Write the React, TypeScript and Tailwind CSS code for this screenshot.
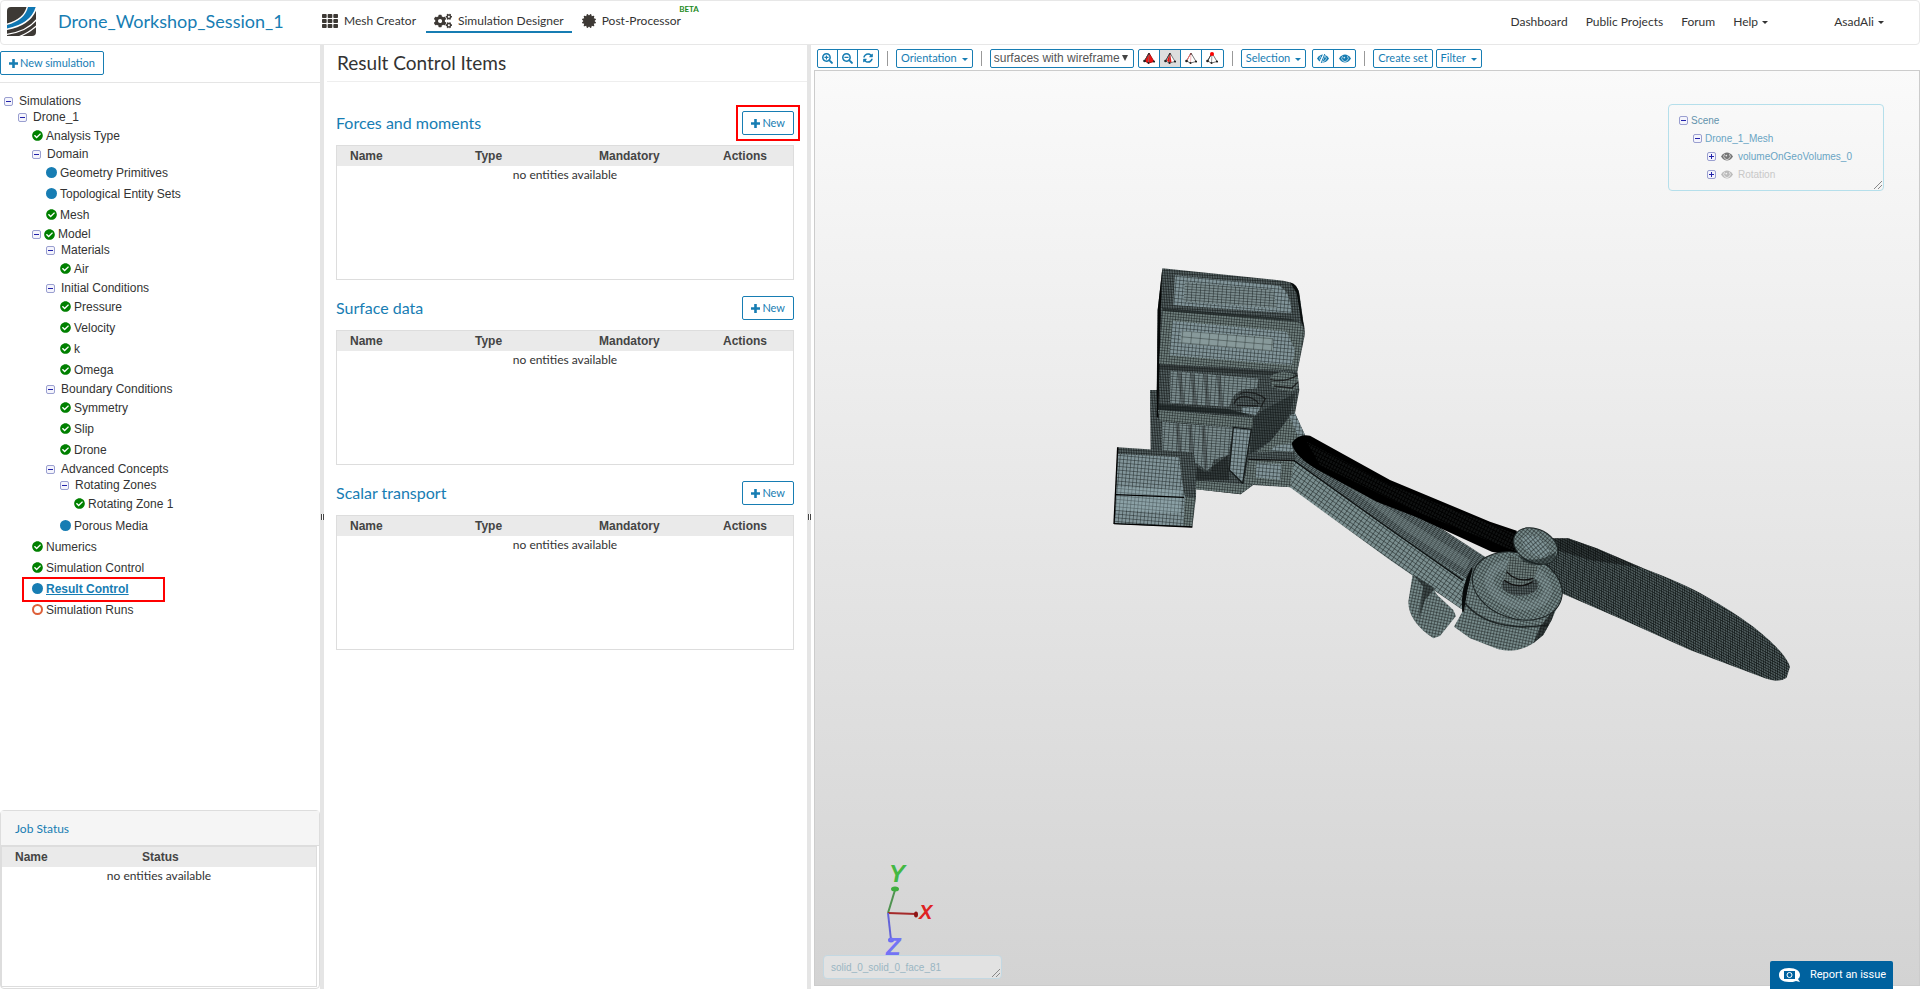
import { useState } from "react";
import type { ReactNode } from "react";
import {
  FaCertificate,
  FaCheckCircle,
  FaCogs,
  FaSearchMinus,
  FaSearchPlus,
  FaSyncAlt,
  FaTh,
} from "react-icons/fa";

type Status = "done" | "set" | "open";

interface TreeItem {
  label: string;
  status?: Status;
  active?: boolean;
  children?: TreeItem[];
}

const TREE: TreeItem[] = [
  {
    label: "Simulations",
    children: [
      {
        label: "Drone_1",
        children: [
          { label: "Analysis Type", status: "done" },
          {
            label: "Domain",
            children: [
              { label: "Geometry Primitives", status: "set" },
              { label: "Topological Entity Sets", status: "set" },
              { label: "Mesh", status: "done" },
            ],
          },
          {
            label: "Model",
            status: "done",
            children: [
              { label: "Materials", children: [{ label: "Air", status: "done" }] },
              {
                label: "Initial Conditions",
                children: [
                  { label: "Pressure", status: "done" },
                  { label: "Velocity", status: "done" },
                  { label: "k", status: "done" },
                  { label: "Omega", status: "done" },
                ],
              },
              {
                label: "Boundary Conditions",
                children: [
                  { label: "Symmetry", status: "done" },
                  { label: "Slip", status: "done" },
                  { label: "Drone", status: "done" },
                ],
              },
              {
                label: "Advanced Concepts",
                children: [
                  {
                    label: "Rotating Zones",
                    children: [{ label: "Rotating Zone 1", status: "done" }],
                  },
                  { label: "Porous Media", status: "set" },
                ],
              },
            ],
          },
          { label: "Numerics", status: "done" },
          { label: "Simulation Control", status: "done" },
          { label: "Result Control", status: "set", active: true },
          { label: "Simulation Runs", status: "open" },
        ],
      },
    ],
  },
];

const SECTIONS = ["Forces and moments", "Surface data", "Scalar transport"];

function Caret() {
  return (
    <span className="ml-px inline-block border-x-[3px] border-t-[3px] border-x-transparent border-t-current align-middle" />
  );
}

function Toggle({ open, onClick, label }: { open: boolean; onClick?: () => void; label: string }) {
  return (
    <button
      type="button"
      aria-label={`Toggle ${label}`}
      onClick={onClick}
      className="flex size-[9px] shrink-0 items-center justify-center rounded-xs border border-[#9a9fd0] bg-[#f4f4fc]"
    >
      <svg viewBox="0 0 7 7" className="size-[7px]" stroke="#2222aa" strokeWidth="1">
        <path d="M1 3.5h5" />
        {!open && <path d="M3.5 1v5" />}
      </svg>
    </button>
  );
}

function StatusIcon({ status }: { status: Status }) {
  if (status === "done") return <FaCheckCircle className="size-[11px] shrink-0 text-[#008000]" />;
  if (status === "set") return <span className="size-[11px] shrink-0 rounded-full bg-[#177db3]" />;
  return <span className="size-[11px] shrink-0 rounded-full border-2 border-[#dd5f38]" />;
}

function EyeIcon({ className, slashed }: { className: string; slashed?: boolean }) {
  return (
    <svg viewBox="0 0 12 9" className={`h-[9px] w-3 ${className}`}>
      <path d="M0 4.500C2 1.500 4 .5 6 .5s4 1 6 4c-2 3-4 4-6 4s-4-1-6-4z" fill="currentColor" />
      <path
        d="M3.600 2.200a3.200 3.200 0 1 0 4.800 0"
        fill="none"
        stroke="#fff"
        strokeWidth="0.800"
        opacity="0.800"
      />
      <circle cx="5.300" cy="3.600" r="0.900" fill="#fff" opacity="0.800" />
      {slashed && (
        <>
          <path d="M7.500 0 3.500 9" stroke="#fff" strokeWidth="2.600" />
          <path d="M7.800 0 4.200 9" stroke="currentColor" strokeWidth="1" />
        </>
      )}
    </svg>
  );
}

function TreeNode({ item }: { item: TreeItem }) {
  const [open, setOpen] = useState(true);
  const hasChildren = !!item.children;
  const leafGroup = item.children?.every((c) => !c.children);

  return (
    <li>
      <div className={`relative flex items-center ${hasChildren ? "h-4" : "h-[21px]"}`}>
        {hasChildren && <Toggle open={open} onClick={() => setOpen(!open)} label={item.label} />}
        {hasChildren && item.status && <span className="w-[3px]" />}
        {item.status && <StatusIcon status={item.status} />}
        <a
          href="#"
          className={
            item.active
              ? "pl-[3px] font-bold text-[#177db3] underline"
              : hasChildren && !item.status
                ? "pl-1.5"
                : "pl-[3px]"
          }
        >
          {item.label}
        </a>
        {item.active && (
          <span className="pointer-events-none absolute -left-2.5 -top-px h-[25px] w-[143px] border-2 border-[#f00]" />
        )}
      </div>
      {item.children && open && (
        <ul className={`pl-3.5 ${leafGroup ? "pb-px" : ""}`}>
          {item.children.map((child) => (
            <TreeNode key={child.label} item={child} />
          ))}
        </ul>
      )}
    </li>
  );
}

function NewButton({ label }: { label: string }) {
  return (
    <button
      type="button"
      className="flex h-6 items-center gap-0.5 rounded-xs border border-[#177db3] bg-white px-2 text-[11px] text-[#177db3]"
    >
      <svg viewBox="0 0 9 9" className="size-[9px]" stroke="currentColor" strokeWidth="2.600">
        <path d="M0 4.500h9M4.500 0v9" />
      </svg>
      {label}
    </button>
  );
}

function EntityTable({ columns, widths }: { columns: string[]; widths: string[] }) {
  return (
    <table className="w-full table-fixed text-xs">
      <thead className="bg-[#eaeaea] font-['Liberation_Sans',sans-serif] text-[#444]">
        <tr>
          {columns.map((c, i) => (
            <th key={c} className={`h-5 pl-[13px] text-left font-bold ${widths[i]}`}>
              {c}
            </th>
          ))}
        </tr>
      </thead>
      <tbody>
        <tr>
          <td colSpan={columns.length} className="h-[18px] text-center">
            no entities available
          </td>
        </tr>
      </tbody>
    </table>
  );
}

function Section({ title, marked }: { title: string; marked?: boolean }) {
  return (
    <section className="mb-4">
      <div className="mb-2.5 flex items-center justify-between">
        <h2 className="text-base text-[#177db3]">{title}</h2>
        <div className="relative">
          <NewButton label="New" />
          {marked && (
            <span className="pointer-events-none absolute -inset-1.5 border-2 border-[#f00]" />
          )}
        </div>
      </div>
      <div className="h-[135px] border border-[#ddd]">
        <EntityTable
          columns={["Name", "Type", "Mandatory", "Actions"]}
          widths={["w-[125px]", "w-[124px]", "w-[124px]", ""]}
        />
      </div>
    </section>
  );
}

function Logo() {
  return (
    <svg viewBox="0 0 29 29" className="size-[29px] shrink-0">
      <defs>
        <clipPath id="logo">
          <path d="M4 0H29V25Q29 29 25 29H0V4Q0 0 4 0z" />
        </clipPath>
      </defs>
      <g clipPath="url(#logo)">
        <rect width="29" height="29" fill="#3d3935" />
        <path d="M0 18C12 14 19 8 20.500 0H29C27 12 15 20 0 22z" fill="#0f77b3" />
        <g fill="none" stroke="#fff">
          <path d="M-1 17.500C11 14.500 18.500 9 20.500-1" strokeWidth="1.400" />
          <path d="M-1 22.500C15 19.500 26 12 29.500 0" strokeWidth="1.600" />
          <path d="M-1 27.500C13 25.500 24 20 30 12" strokeWidth="1.400" />
          <path d="M11 30C19 27.500 25 23 30 18.500" strokeWidth="1.200" />
        </g>
      </g>
    </svg>
  );
}

function Header() {
  const tabs = [
    { label: "Mesh Creator", icon: FaTh, size: "size-4" },
    { label: "Simulation Designer", icon: FaCogs, size: "size-[18px]", active: true },
    { label: "Post-Processor", icon: FaCertificate, size: "size-3.5", beta: true },
  ];
  return (
    <header className="flex h-[45px] shrink-0 items-center rounded-sm border border-[#e7e7e7] pb-[3px] pl-1.5 pr-[35px] text-[#333]">
      <Logo />
      <a href="#" className="ml-[22px] w-[256px] text-lg text-[#177db3]">
        Drone_Workshop_Session_1
      </a>
      <nav className="flex gap-0.5 text-xs">
        {tabs.map((t) => (
          <a
            key={t.label}
            href="#"
            className={`relative flex h-6 items-center gap-1.5 border-b-2 px-2 pt-0.5 ${t.active ? "border-[#177db3]" : "border-transparent"}`}
          >
            <t.icon className={`text-[#3d3935] ${t.size}`} />
            {t.label}
            {t.beta && (
              <span className="absolute -right-2.5 -top-1 text-[8px] font-bold leading-none text-[#1d8a1d]">
                BETA
              </span>
            )}
          </a>
        ))}
      </nav>
      <nav className="ml-auto mt-0.5 flex items-center gap-[18px] text-xs">
        <a href="#">Dashboard</a>
        <a href="#">Public Projects</a>
        <a href="#">Forum</a>
        <button type="button">
          Help <Caret />
        </button>
        <button type="button" className="ml-12">
          AsadAli <Caret />
        </button>
      </nav>
    </header>
  );
}

function Splitter() {
  return (
    <div className="flex w-1 shrink-0 items-center justify-center bg-[#e5e5e5]">
      <span className="h-1.5 w-[3px] border-x border-[#444] bg-white" />
    </div>
  );
}

// tetrahedron glyph used for the volume / face / edge / node pick modes
function PickIcon({ mode }: { mode: "volume" | "face" | "edge" | "node" }) {
  return (
    <svg viewBox="0 0 12 12" className="size-3" fill="none" strokeLinejoin="round">
      <path
        d="M6 1 1.500 9l4 2L11 9.500z"
        fill={mode === "volume" ? "#e11" : "#fff"}
        stroke={mode === "volume" ? "#a11" : "#777"}
      />
      {mode === "face" && <path d="M6 1 3 8.500 5.500 11l2-1z" fill="#e11" />}
      <path d="M6 1 5.500 11" stroke={mode === "edge" ? "#e99" : "#777"} strokeWidth="0.700" />
      <path d="M6 1 1.500 9" stroke={mode === "edge" ? "#e66" : "#444"} />
      <g fill="#222">
        <circle cx="1.500" cy="9" r="1.300" />
        <circle cx="5.500" cy="11" r="1" />
        <circle cx="11" cy="9.500" r="1.100" />
      </g>
      <circle cx="6" cy="2" r={mode === "node" ? 2 : 0.8} fill={mode === "node" ? "#f00" : "#222"} />
    </svg>
  );
}

function ButtonGroup({
  items,
  active,
  width,
}: {
  items: { label: string; icon: ReactNode }[];
  active?: number;
  width: string;
}) {
  return (
    <div className="flex h-[19px] divide-x divide-[#177db3] overflow-hidden rounded-xs border border-[#177db3] text-[#177db3]">
      {items.map((b, i) => (
        <button
          key={b.label}
          type="button"
          aria-label={b.label}
          className={`flex items-center justify-center ${width} ${i === active ? "bg-[#ddd]" : ""}`}
        >
          {b.icon}
        </button>
      ))}
    </div>
  );
}

function ToolButton({ children, caret }: { children: string; caret?: boolean }) {
  return (
    <button
      type="button"
      className="flex h-[19px] items-center whitespace-nowrap rounded-xs border border-[#177db3] px-1 text-[11px] text-[#177db3]"
    >
      {children}
      {caret && (
        <span className="ml-[5px] mt-0.5 border-x-[3px] border-t-[3px] border-x-transparent border-t-current" />
      )}
    </button>
  );
}

function Divider() {
  return <span className="mx-2 h-[15px] w-px bg-[#999]" />;
}

function Toolbar() {
  return (
    <div className="flex h-[25px] items-center pl-1.5 pt-px">
      <ButtonGroup
        width="w-5"
        items={[
          { label: "Zoom in", icon: <FaSearchPlus className="size-[11px]" /> },
          { label: "Zoom out", icon: <FaSearchMinus className="size-[11px]" /> },
          { label: "Reset view", icon: <FaSyncAlt className="size-[10px]" /> },
        ]}
      />
      <Divider />
      <ToolButton caret>Orientation</ToolButton>
      <Divider />
      <div className="relative mr-1 flex items-center">
        <select
          aria-label="Render mode"
          className="h-[19px] w-[144px] appearance-none rounded-xs border border-[#177db3] bg-white pl-[3px] font-['Liberation_Sans',sans-serif] text-xs text-[#555]"
        >
          <option>surfaces with wireframe</option>
          <option>surfaces</option>
          <option>wireframe</option>
        </select>
        <span className="pointer-events-none absolute right-1.5 top-1.5 border-x-[3px] border-t-[6px] border-x-transparent border-t-[#444]" />
      </div>
      <ButtonGroup
        width="w-[21px]"
        active={1}
        items={[
          { label: "Pick volumes", icon: <PickIcon mode="volume" /> },
          { label: "Pick faces", icon: <PickIcon mode="face" /> },
          { label: "Pick edges", icon: <PickIcon mode="edge" /> },
          { label: "Pick nodes", icon: <PickIcon mode="node" /> },
        ]}
      />
      <Divider />
      <ToolButton caret>Selection</ToolButton>
      <span className="w-1.5" />
      <ButtonGroup
        width="w-[21px]"
        items={[
          { label: "Hide selection", icon: <EyeIcon className="" slashed /> },
          { label: "Show selection", icon: <EyeIcon className="" /> },
        ]}
      />
      <Divider />
      <ToolButton>Create set</ToolButton>
      <span className="w-[3px]" />
      <ToolButton caret>Filter</ToolButton>
    </div>
  );
}

function Grid({
  id,
  step,
  angle,
  base,
  line,
  width = 1.4,
  skew = 0,
}: {
  id: string;
  step: [number, number];
  angle: number;
  base: string;
  line: string;
  width?: number;
  skew?: number;
}) {
  return (
    <pattern
      id={id}
      width={step[0]}
      height={step[1]}
      patternUnits="userSpaceOnUse"
      patternTransform={`rotate(${angle}) skewX(${skew})`}
    >
      <rect width={step[0]} height={step[1]} fill={base} />
      <path d={`M0 0H${step[0]}M0 0V${step[1]}`} stroke={line} strokeWidth={width * 2} />
    </pattern>
  );
}

function DroneMesh() {
  return (
    <g transform="translate(1090 250) scale(0.33333)">
      <defs>
        <Grid id="open" step={[27, 18]} angle={5} base="#87999a" line="#1e2626" width={1.2} />
        <Grid id="light" step={[11, 11]} angle={5} base="#82959a" line="#1c2424" />
        <Grid id="rows" step={[13, 8]} angle={4} base="#7b8c8e" line="#1c2424" />
        <Grid id="mid" step={[8, 8]} angle={5} base="#71817f" line="#151b1b" />
        <Grid id="dense" step={[5, 8]} angle={3} base="#5c696a" line="#0c1010" />
        <Grid id="armTop" step={[12, 5]} angle={32} base="#68787a" line="#0d1212" />
        <Grid id="armSide" step={[13, 11]} angle={35} base="#7b8f90" line="#161d1d" />
        <Grid id="motor" step={[9, 9]} angle={12} base="#788c8c" line="#141a1a" />
        <Grid id="hub" step={[12, 9]} angle={15} base="#82979a" line="#141a1a" />
        <Grid id="blade" step={[8, 7]} angle={28} skew={30} base="#505d5e" line="#0a0f0f" width={1.8} />
        <Grid id="black" step={[9, 11]} angle={27} base="#101212" line="#000" width={3} />
      </defs>

      {/* central body */}
      <path d="M180 420h30v190h-28z" fill="url(#dense)" />
      <path
        d="M217 55 580 92Q622 98 628 130L640 215Q647 240 643 262L622 365 628 420 615 490 645 555 640 600 604 712 490 705 452 733 318 718 205 600 200 420 203 180z"
        fill="url(#dense)"
      />
      <path d="M217 55 203 180 200 500 205 505 212 180z" fill="#050707" />
      <path d="M600 97Q624 102 628 135L642 235 634 215 620 130z" fill="#0a0e0e" />
      <path d="M255 76 560 106Q600 115 605 190L250 165z" fill="url(#light)" />
      <path d="M285 95 550 120 560 175 280 155z" fill="url(#rows)" />
      <path d="M218 176 610 210Q640 218 641 250L622 362 207 342z" fill="url(#mid)" />
      <path d="M248 213 590 245 615 300 605 345 238 316z" fill="url(#light)" />
      <path d="M275 242 548 262 550 304 270 280z" fill="url(#open)" />
      <path d="M218 174 600 206 630 217 600 213 218 183z" fill="#1a2020" opacity=".75" />
      <path d="M207 342 622 368V378L207 358z" fill="#1a2020" opacity=".45" />
      <path d="M242 362 505 386 500 415 455 420 415 470 240 460z" fill="url(#rows)" />
      <path d="M205 462 415 477 490 497 205 480z" fill="#161c1c" opacity=".7" />
      <path d="M204 480 492 505 486 538 210 512z" fill="url(#mid)" />
      <path d="M217 516 430 534 415 615 370 630 360 668 320 640 217 605z" fill="url(#rows)" />
      <g fill="#111" opacity=".3">
        <path d="M262 366h12l10 95h-12zM300 369h12l10 95h-12zM340 372h12l8 95h-12zM380 376h12l8 92h-12zM256 520h12l8 88h-12zM294 524h12l8 110h-12zM334 528h12l8 128h-12z" />
      </g>

      {/* clamps */}
      <path d="M540 385Q545 368 580 366 620 368 624 385L626 415 600 425 545 412z" fill="url(#mid)" />
      <path
        d="M540 388Q580 400 622 376M552 408 606 414 624 396"
        fill="none"
        stroke="#111"
        strokeWidth="4"
        opacity=".8"
      />
      <path d="M420 470Q424 425 470 418 520 414 530 440L528 462 500 495 440 484z" fill="url(#dense)" />
      <path
        d="M432 462Q440 436 470 440 498 446 506 462M450 430Q490 420 526 446L512 472M440 466 505 468"
        fill="none"
        stroke="#111"
        strokeWidth="4"
        opacity=".7"
      />
      <path d="M455 470 512 472 498 494 458 488z" fill="url(#light)" />
      <path d="M490 503 520 480 615 430 600 490 560 560 480 612z" fill="url(#dense)" />
      <path d="M490 503 520 480 615 430 600 490 560 560 480 612z" fill="#0c1010" opacity=".35" />
      <path d="M540 575 600 500 630 560 605 605 500 605z" fill="url(#mid)" />
      <path d="M555 588 602 580 612 604 540 604z" fill="url(#light)" />
      <path d="M598 497 615 490 645 555 625 560z" fill="url(#light)" />
      <path d="M430 532 484 538 458 700 418 660z" fill="url(#light)" stroke="#151a1a" strokeWidth="4" />
      <path d="M320 650 345 665 415 615 418 690 318 690z" fill="#101414" opacity=".5" />
      <path d="M318 692 460 702 486 706 452 733 318 718z" fill="url(#mid)" />
      <path d="M475 628 615 632 604 712 462 700z" fill="url(#mid)" />
      <path d="M500 640 575 642 572 690 497 682z" fill="url(#light)" />
      <path d="M475 628 615 632" stroke="#111" strokeWidth="4" />

      {/* side cylinder */}
      <path d="M83 592 310 607Q320 640 318 740L307 832 72 822z" fill="url(#dense)" />
      <path d="M84 612 268 622 275 690 285 740 280 828 72 821z" fill="url(#light)" />
      <path d="M80 710 274 720 270 790 76 780z" fill="#a3bcc2" opacity=".3" />
      <path d="M285 740 316 742 306 830 280 828z" fill="url(#mid)" />
      <path d="M78 734 282 742M72 821 307 831" stroke="#000" strokeWidth="4" />
      <path d="M83 592 72 822" stroke="#000" strokeWidth="4" />

      {/* arm */}
      <path d="M608 590 700 610 1000 800 1200 930 1190 1000 1120 992 900 838 620 636z" fill="url(#armTop)" />
      <path d="M760 700 800 715 1140 930 1128 960 950 845z" fill="#90a3a5" opacity=".25" />
      <path d="M612 632 900 838 1150 1000 1130 1085 1110 1075 900 930 600 712z" fill="url(#armSide)" />
      <path d="M612 632 900 838 1120 992" fill="none" stroke="#0c1010" strokeWidth="4" />

      {/* hook */}
      <path
        d="M968 972 955 1055Q955 1115 1030 1165L1050 1158 1098 1098 1090 1080 1042 1035 1025 1010z"
        fill="url(#motor)"
      />
      <path d="M968 972 1035 1015 1005 1050 985 1110 1000 1010z" fill="#0c1010" opacity=".55" />

      {/* left blade */}
      <path
        d="M605 580Q625 550 660 557L900 690 1200 815 1280 842 1290 922 1205 905 980 802 860 755 680 658Q615 620 605 580z"
        fill="#000"
      />
      <path d="M650 575 900 705 1270 850 1280 905 980 785 690 645z" fill="url(#black)" />

      {/* right blade */}
      <path
        d="M1385 865H1435L1520 895 1660 955Q1780 1000 1850 1040 1930 1085 1990 1130 2085 1205 2100 1250L2090 1283Q2065 1300 2025 1285L1800 1200 1600 1110 1415 1030 1335 975z"
        fill="url(#blade)"
      />
      <path d="M1385 865H1435L1520 895 1660 955 1500 930 1400 900z" fill="#080b0b" opacity=".45" />

      {/* motor */}
      <path
        d="M1150 950 1115 1030 1117 1085 1092 1130 1140 1165 1225 1198Q1280 1212 1330 1180L1360 1155 1385 1110 1415 1040z"
        fill="url(#motor)"
      />
      <path d="M1385 1110 1360 1155 1330 1180 1350 1130 1390 1080 1415 1020z" fill="#060909" opacity=".6" />
      <ellipse
        cx="1282"
        cy="1008"
        rx="138"
        ry="98"
        transform="rotate(18 1282 1008)"
        fill="url(#motor)"
        stroke="#1b2222"
        strokeWidth="3"
      />
      <ellipse
        cx="1285"
        cy="1005"
        rx="90"
        ry="58"
        transform="rotate(18 1285 1005)"
        fill="none"
        stroke="#9cb0b2"
        strokeWidth="28"
        opacity=".2"
      />
      <path d="M1146 955Q1112 1015 1119 1085 1128 1020 1146 955z" fill="#080b0b" stroke="#080b0b" strokeWidth="5" />
      <path d="M1125 1060Q1200 1150 1375 1125" stroke="#101515" strokeWidth="5" fill="none" opacity=".8" />
      <ellipse cx="1290" cy="1005" rx="55" ry="32" fill="url(#dense)" />
      <path d="M1260 915 1345 950 1328 995Q1285 1020 1242 990z" fill="url(#mid)" />
      <path d="M1250 965Q1280 1000 1330 985M1242 990Q1285 1022 1328 995" stroke="#111" strokeWidth="4" fill="none" />
      <ellipse
        cx="1337"
        cy="888"
        rx="70"
        ry="50"
        transform="rotate(28 1337 888)"
        fill="url(#motor)"
        stroke="#222b2b"
        strokeWidth="3"
      />
      <path d="M1280 912Q1330 950 1398 905L1395 925Q1350 960 1300 935z" fill="#0c1111" opacity=".45" />
      <ellipse cx="1337" cy="888" rx="46" ry="26" transform="rotate(35 1337 888)" fill="url(#hub)" />
    </g>
  );
}

function Axes() {
  return (
    <g strokeWidth="2" fontFamily="Liberation Sans, sans-serif" fontWeight="bold" fontStyle="italic">
      <path d="M888 913 895 890" stroke="#4f9350" />
      <path d="M888 913 916 914" stroke="#a52a2a" />
      <path d="M888 913 891 940" stroke="#6464d8" />
      <ellipse cx="895" cy="889" rx="4" ry="2.500" fill="#3fae3f" />
      <ellipse cx="916" cy="914.500" rx="2" ry="3" fill="#8e1515" />
      <ellipse cx="891" cy="940" rx="3" ry="2.500" fill="#6a6af5" />
      <text x="889" y="882" fontSize="24" fill="#43b843">
        Y
      </text>
      <text x="919" y="919" fontSize="20" fill="#df2222">
        X
      </text>
      <text x="886" y="955" fontSize="24" fill="#7373f5">
        Z
      </text>
    </g>
  );
}

function ResizeGrip() {
  return (
    <svg viewBox="0 0 8 8" className="absolute bottom-px right-px size-2" stroke="#888">
      <path d="M0 8 8 0M4 8l4-4" />
    </svg>
  );
}

function SceneRow({
  label,
  open,
  className,
  eye,
}: {
  label: string;
  open: boolean;
  className: string;
  eye?: string;
}) {
  return (
    <li className={`flex h-[18px] items-center gap-[3px] ${className}`}>
      <Toggle open={open} label={label} />
      {eye && <EyeIcon className={`mx-0.5 ${eye}`} />}
      <a href="#">{label}</a>
    </li>
  );
}

function Viewer() {
  return (
    <div className="relative ml-[3px] mb-[3px] min-h-0 flex-1 border border-[#ccc] bg-linear-to-b from-[#fafafa] to-[#d3d3d3] font-['Liberation_Sans',sans-serif] text-[10px]">
      <svg viewBox="815 71 1104 914" className="absolute inset-0 size-full">
        <DroneMesh />
        <Axes />
      </svg>
      <ul className="absolute right-[35px] top-[33px] h-[87px] w-[216px] rounded-sm border border-[#b5dfeb] pl-2.5 pt-1.5 text-[#6aa5c4]">
        <SceneRow label="Scene" open className="text-[#6393ad]" />
        <SceneRow label="Drone_1_Mesh" open className="pl-3.5" />
        <SceneRow label="volumeOnGeoVolumes_0" open={false} className="pl-7" eye="text-[#777]" />
        <SceneRow label="Rotation" open={false} className="pl-7 text-[#c8c8c8]" eye="text-[#bbb]" />
        <ResizeGrip />
      </ul>
      <div className="absolute bottom-1.5 left-2 flex h-6 w-[179px] items-center rounded-sm border border-[#c3d8e2] bg-[#e2e2e2] pl-[7px] text-[#9ab6c3]">
        solid_0_solid_0_face_81
        <ResizeGrip />
      </div>
    </div>
  );
}

function JobStatus() {
  return (
    <section className="h-[179px] shrink-0 rounded-sm border border-[#ddd]">
      <h2 className="flex h-[35px] items-center border-b border-[#ddd] bg-[#f5f5f5] pl-3.5 pt-px text-xs text-[#177db3]">
        Job Status
      </h2>
      <div className="mr-0.5 h-[141px] border border-[#ddd]">
        <EntityTable columns={["Name", "Status"]} widths={["w-[127px]", ""]} />
      </div>
    </section>
  );
}

export default function App() {
  return (
    <div className="flex h-screen flex-col overflow-hidden bg-white font-[Lato,sans-serif] text-[#333]">
      <Header />
      <div className="flex min-h-0 flex-1">
        <aside className="flex w-[320px] shrink-0 flex-col">
          <div className="border-b border-[#e5e5e5] pb-[7px] pt-1.5">
            <div className="flex">
              <NewButton label="New simulation" />
            </div>
          </div>
          <ul className="min-h-0 flex-1 overflow-auto pl-1 pt-2.5 font-['Liberation_Sans',sans-serif] text-xs">
            {TREE.map((item) => (
              <TreeNode key={item.label} item={item} />
            ))}
          </ul>
          <JobStatus />
        </aside>
        <Splitter />
        <main className="w-[483px] shrink-0 overflow-auto pl-[3px]">
          <h1 className="flex h-[37px] items-center border-b border-[#eee] pl-2.5 text-[19px]">
            Result Control Items
          </h1>
          <div className="pl-[9px] pr-[13px] pt-[29px]">
            {SECTIONS.map((title, i) => (
              <Section key={title} title={title} marked={i === 0} />
            ))}
          </div>
        </main>
        <Splitter />
        <div className="flex min-w-0 flex-1 flex-col">
          <Toolbar />
          <Viewer />
        </div>
      </div>
      <button
        type="button"
        className="fixed bottom-0 right-[27px] flex h-7 w-[123px] items-center gap-2.5 rounded-t-xs bg-[#00629f] pl-[9px] font-[Roboto,sans-serif] text-[11px] text-white"
      >
        <svg viewBox="0 0 21 15" className="h-[15px] w-[21px]">
          <path d="M10 0C3 0 0 3 0 7s3 7 10 7c3 0 5 0 7-1l4 1-2-3c1-1 2-2 2-4 0-4-4-7-11-7z" fill="#fff" />
          <rect x="5" y="3" width="11" height="8" fill="#00629f" />
          <circle cx="10.500" cy="7" r="2.500" fill="none" stroke="#fff" />
        </svg>
        Report an issue
      </button>
    </div>
  );
}
